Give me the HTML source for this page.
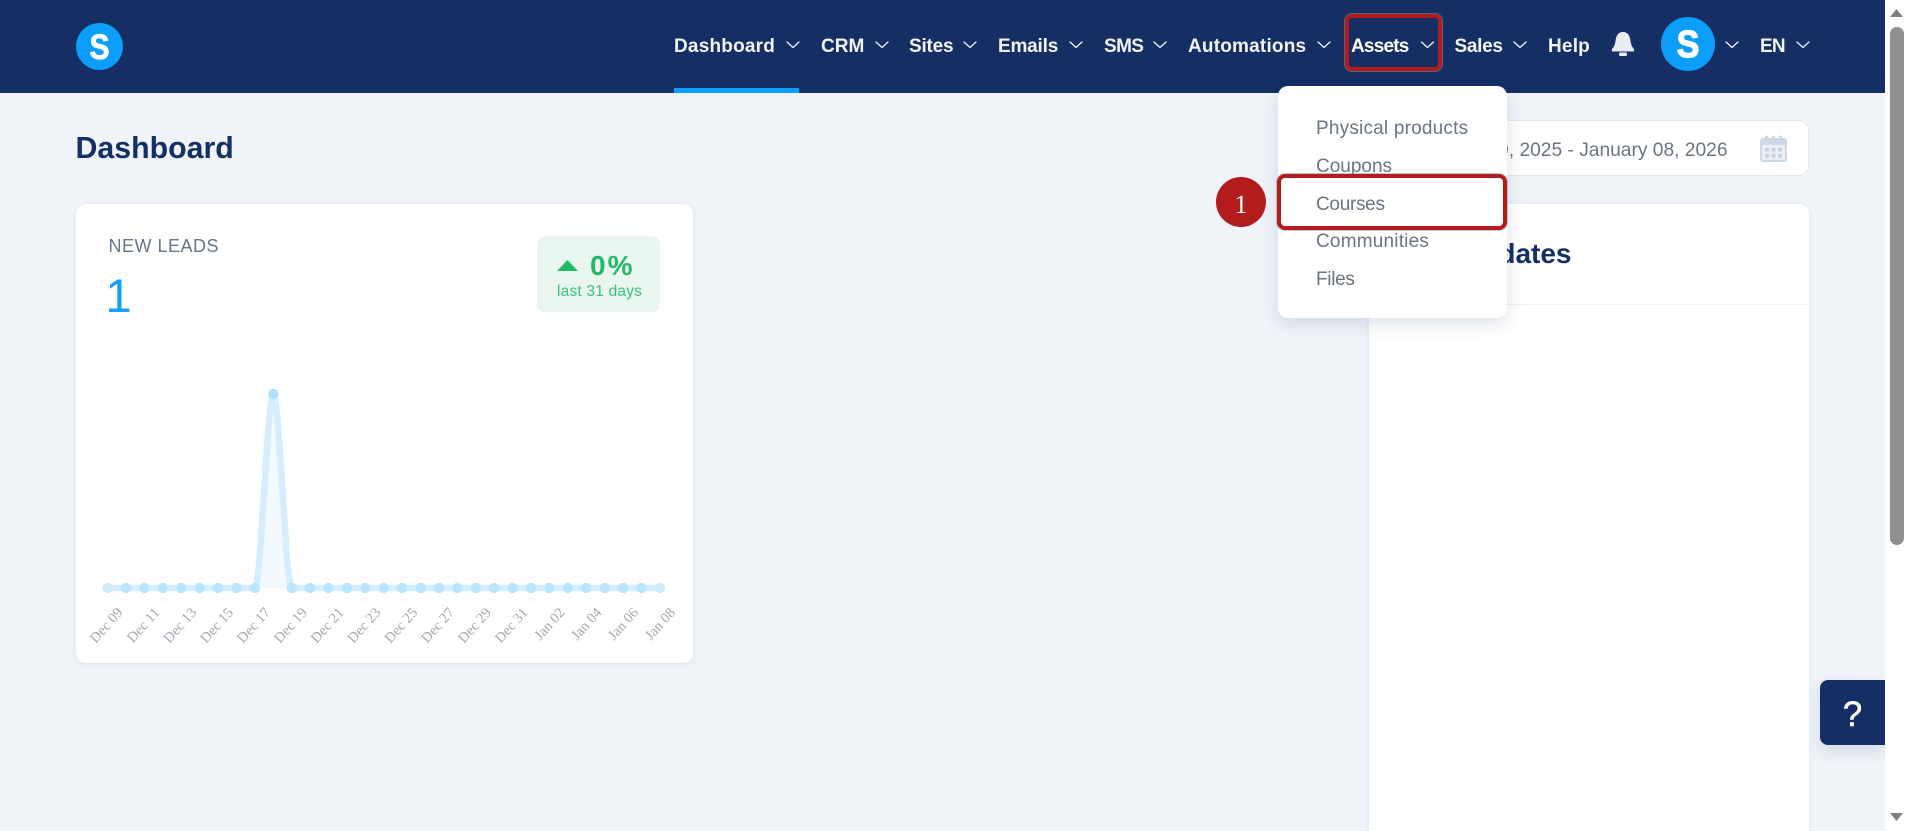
<!DOCTYPE html>
<html lang="en">
<head>
<meta charset="utf-8">
<title>Dashboard</title>
<style>
html,body{margin:0;padding:0;width:1908px;height:831px;overflow:hidden;background:#f0f4f9;font-family:"Liberation Sans",Arial,sans-serif}
#p{position:relative;width:1908px;height:831px;overflow:hidden;background:#f0f4f9}
.a{position:absolute}
.t{position:absolute;line-height:0;white-space:nowrap}
.n{font-size:19px;font-weight:700;color:#f1f3f7;top:47.2px}
.m{font-size:19px;color:#6b7483;left:1316px}
.card{position:absolute;background:#fff;border-radius:10px;box-shadow:0 1px 6px rgba(20,47,99,.09)}
.red{position:absolute;box-sizing:border-box;border:4px solid #b21c1c;box-shadow:0 0 0 1px rgba(150,150,150,.55)}
svg{position:absolute;overflow:visible}
</style>
</head>
<body>
<div id="p">
<!-- header -->
<div class="a" style="left:0;top:0;width:1885px;height:93px;background:#152e63"></div>
<div class="a" style="left:674px;top:88px;width:125px;height:5px;background:#0b9ffb"></div>

<div class="a" style="left:76px;top:23px;width:47px;height:47px;border-radius:50%;background:#0b9ffb"></div>
<span class="t" style="left:76px;width:47px;text-align:center;top:47.5px;font-size:35px;font-weight:700;color:#fff;-webkit-text-stroke:.8px #fff;transform:scaleX(.86)">S</span>

<span class="t n" style="left:674px;letter-spacing:.2px">Dashboard</span>
<span class="t n" style="left:821px">CRM</span>
<span class="t n" style="left:909px;letter-spacing:-.2px">Sites</span>
<span class="t n" style="left:998px;letter-spacing:-.2px">Emails</span>
<span class="t n" style="left:1104px;letter-spacing:-.6px">SMS</span>
<span class="t n" style="left:1188px;letter-spacing:.2px">Automations</span>
<span class="t n" style="left:1351px;letter-spacing:-.8px;color:#fff">Assets</span>
<span class="t n" style="left:1454.500px;letter-spacing:-.3px">Sales</span>
<span class="t n" style="left:1548px;letter-spacing:.2px">Help</span>
<span class="t n" style="left:1760px;letter-spacing:-.8px">EN</span>

<svg style="left:0;top:0" width="1908" height="93" fill="none" stroke="#e8ecf3" stroke-width="1.4" stroke-linecap="round" stroke-linejoin="round">
<path d="M787 42l6 5.500 6-5.500"/>
<path d="M876 42l6 5.500 6-5.500"/>
<path d="M964 42l6 5.500 6-5.500"/>
<path d="M1070 42l6 5.500 6-5.500"/>
<path d="M1154 42l6 5.500 6-5.500"/>
<path d="M1318 42l6 5.500 6-5.500"/>
<path d="M1421.500 42l6 5.500 6-5.500"/>
<path d="M1514 42l6 5.500 6-5.500"/>
<path d="M1726 42l6 5.500 6-5.500"/>
<path d="M1797 42l6 5.500 6-5.500"/>
</svg>

<svg style="left:1612px;top:32px" width="22" height="24" viewBox="0 0 22 24"><path fill="#e9ecf2" d="M11 0C6 0 4 4 3.500 9 3 13 1.500 15.500 0 17v2.500h22V17c-1.500-1.500-3-4-3.500-8C18 4 16 0 11 0z"/><rect x="7" y="20.500" width="8" height="3.500" rx="1.200" fill="#e9ecf2"/></svg>

<div class="a" style="left:1661px;top:17px;width:54px;height:54px;border-radius:50%;background:#0b9ffb"></div>
<span class="t" style="left:1661px;width:54px;text-align:center;top:44.500px;font-size:38px;font-weight:700;color:#fff;-webkit-text-stroke:1.2px #fff;transform:scaleX(.9)">S</span>

<!-- page title -->
<span class="t" style="left:75.500px;top:148.600px;font-size:30.300px;font-weight:700;color:#142f63">Dashboard</span>

<!-- date range -->
<div class="a" style="box-sizing:border-box;left:1360px;top:120px;width:449px;height:56px;background:#fff;border:1px solid #e4e8ee;border-radius:10px"></div>
<span class="t" style="right:180.500px;top:151.300px;font-size:19.200px;color:#6b7483">December 09, 2025 - January 08, 2026</span>
<svg style="left:1760px;top:135px" width="27" height="27" viewBox="0 0 27 27">
<rect x="0" y="3" width="27" height="24" rx="3" fill="#cdd8e6"/>
<rect x="5" y="0.500" width="3" height="6" rx="1.200" fill="#cdd8e6"/><rect x="12" y="0.500" width="3" height="6" rx="1.200" fill="#cdd8e6"/><rect x="19" y="0.500" width="3" height="6" rx="1.200" fill="#cdd8e6"/>
<rect x="2" y="10" width="23" height="15" rx="1.500" fill="#eaeff5"/>
<g fill="#c5d1e0"><rect x="5" y="13" width="4" height="3.500"/><rect x="11.500" y="13" width="4" height="3.500"/><rect x="18" y="13" width="4" height="3.500"/><rect x="5" y="19" width="4" height="3.500"/><rect x="11.500" y="19" width="4" height="3.500"/><rect x="18" y="19" width="4" height="3.500"/></g>
</svg>

<!-- updates card -->
<div class="card" style="left:1369px;top:204px;width:440px;height:640px"></div>
<span class="t" style="right:336.500px;top:253.600px;font-size:28px;font-weight:700;color:#142f63">Updates</span>
<div class="a" style="left:1369px;top:304px;width:440px;height:1px;background:#eef0f4"></div>

<!-- leads card -->
<div class="card" style="left:76px;top:204px;width:617px;height:459px"></div>
<span class="t" style="left:108.500px;top:246px;font-size:18px;letter-spacing:.5px;color:#66758c">NEW LEADS</span>
<span class="t" style="left:105.500px;top:295.700px;font-size:47px;color:#12a0f5">1</span>
<div class="a" style="left:537px;top:236px;width:123px;height:76px;border-radius:8px;background:#e8f6ef"></div>
<svg style="left:557px;top:260px" width="21" height="11" viewBox="0 0 21 11"><path fill="#22b968" d="M10.500 0L21 11H0z"/></svg>
<span class="t" style="left:590px;top:266.300px;font-size:28px;letter-spacing:2px;font-weight:700;color:#22b968">0%</span>
<span class="t" style="left:557px;top:291.800px;font-size:15.500px;letter-spacing:.2px;color:#3fbf80">last 31 days</span>

<!-- chart -->
<svg style="left:0;top:0" width="1908" height="831">
<path d="M254.900 588C261 588 267.300 394 273.300 394C279.400 394 285.600 588 291.700 588Z" fill="#f2f9ff"/>
<path d="M107.600 588H254.900C261 588 267.300 394 273.300 394C279.400 394 285.600 588 291.700 588H660" fill="none" stroke="#d4eeff" stroke-width="6.500"/>
<g fill="#b9e5ff">
<circle cx="107.600" cy="588" r="5.200" fill="#cfecff"/><circle cx="126" cy="588" r="5.200"/><circle cx="144.400" cy="588" r="5.200"/><circle cx="162.800" cy="588" r="5.200"/><circle cx="181.200" cy="588" r="5.200"/><circle cx="199.700" cy="588" r="5.200"/><circle cx="218.100" cy="588" r="5.200"/><circle cx="236.500" cy="588" r="5.200"/><circle cx="254.900" cy="588" r="5.200"/><circle cx="273.300" cy="394" r="5.200" fill="#aee0ff"/><circle cx="291.700" cy="588" r="5.200"/><circle cx="310.100" cy="588" r="5.200"/><circle cx="328.500" cy="588" r="5.200"/><circle cx="346.900" cy="588" r="5.200"/><circle cx="365.300" cy="588" r="5.200"/><circle cx="383.800" cy="588" r="5.200"/><circle cx="402.200" cy="588" r="5.200"/><circle cx="420.600" cy="588" r="5.200"/><circle cx="439" cy="588" r="5.200"/><circle cx="457.400" cy="588" r="5.200"/><circle cx="475.800" cy="588" r="5.200"/><circle cx="494.200" cy="588" r="5.200"/><circle cx="512.600" cy="588" r="5.200"/><circle cx="531" cy="588" r="5.200"/><circle cx="549.400" cy="588" r="5.200"/><circle cx="567.900" cy="588" r="5.200"/><circle cx="586.300" cy="588" r="5.200"/><circle cx="604.700" cy="588" r="5.200"/><circle cx="623.100" cy="588" r="5.200"/><circle cx="641.500" cy="588" r="5.200"/><circle cx="660" cy="588" r="5.200" fill="#cfecff"/>
</g>
<g font-family="'Liberation Serif',serif" font-size="14.500" fill="#a0a7af" text-anchor="end">
<text transform="translate(123.500 613) rotate(-48)">Dec 09</text>
<text transform="translate(160.400 613) rotate(-48)">Dec 11</text>
<text transform="translate(197.200 613) rotate(-48)">Dec 13</text>
<text transform="translate(234 613) rotate(-48)">Dec 15</text>
<text transform="translate(270.900 613) rotate(-48)">Dec 17</text>
<text transform="translate(307.700 613) rotate(-48)">Dec 19</text>
<text transform="translate(344.500 613) rotate(-48)">Dec 21</text>
<text transform="translate(381.300 613) rotate(-48)">Dec 23</text>
<text transform="translate(418.200 613) rotate(-48)">Dec 25</text>
<text transform="translate(455 613) rotate(-48)">Dec 27</text>
<text transform="translate(491.800 613) rotate(-48)">Dec 29</text>
<text transform="translate(528.600 613) rotate(-48)">Dec 31</text>
<text transform="translate(565.400 613) rotate(-48)">Jan 02</text>
<text transform="translate(602.300 613) rotate(-48)">Jan 04</text>
<text transform="translate(639.100 613) rotate(-48)">Jan 06</text>
<text transform="translate(676 613) rotate(-48)">Jan 08</text>
</g>
</svg>

<!-- help button -->
<div class="a" style="left:1820px;top:680px;width:65px;height:65px;background:#152e63;border-radius:8px 0 0 8px;box-shadow:0 6px 16px rgba(20,47,99,.14)"></div>
<span class="t" style="left:1820px;width:65px;text-align:center;top:715px;font-size:35px;color:#fff;-webkit-text-stroke:.5px #fff">?</span>

<!-- scrollbar -->
<div class="a" style="left:1885px;top:0;width:23px;height:831px;background:#fdfdfd"></div>
<div class="a" style="left:1890px;top:27px;width:14px;height:518px;border-radius:7px;background:#8f8f8f"></div>
<svg style="left:1885px;top:0" width="23" height="831"><path fill="#808080" d="M11.500 9L18 17H5z"/><path fill="#808080" d="M5 813h13l-6.500 8z"/></svg>

<!-- dropdown -->
<div class="a" style="left:1278px;top:86px;width:229px;height:232px;background:#fff;border-radius:10px;box-shadow:0 6px 18px rgba(20,47,99,.14)"></div>
<span class="t m" style="top:129.200px;letter-spacing:.2px">Physical products</span>
<span class="t m" style="top:167.200px">Coupons</span>
<span class="t m" style="top:205.200px;letter-spacing:-.3px">Courses</span>
<span class="t m" style="top:242.200px;letter-spacing:.2px">Communities</span>
<span class="t m" style="top:280.200px;letter-spacing:-.3px">Files</span>

<!-- annotations -->
<div class="red" style="left:1345px;top:14px;width:97px;height:57px;border-radius:7px"></div>
<div class="red" style="left:1277px;top:174px;width:230px;height:56px;border-radius:8px;border-width:4.500px"></div>
<div class="a" style="left:1216px;top:177px;width:50px;height:50px;border-radius:50%;background:#b21c1c"></div>
<span class="t" style="left:1216px;width:50px;text-align:center;top:204.600px;font-family:'Liberation Serif',serif;font-size:26px;color:#fff">1</span>
</div>
</body>
</html>
